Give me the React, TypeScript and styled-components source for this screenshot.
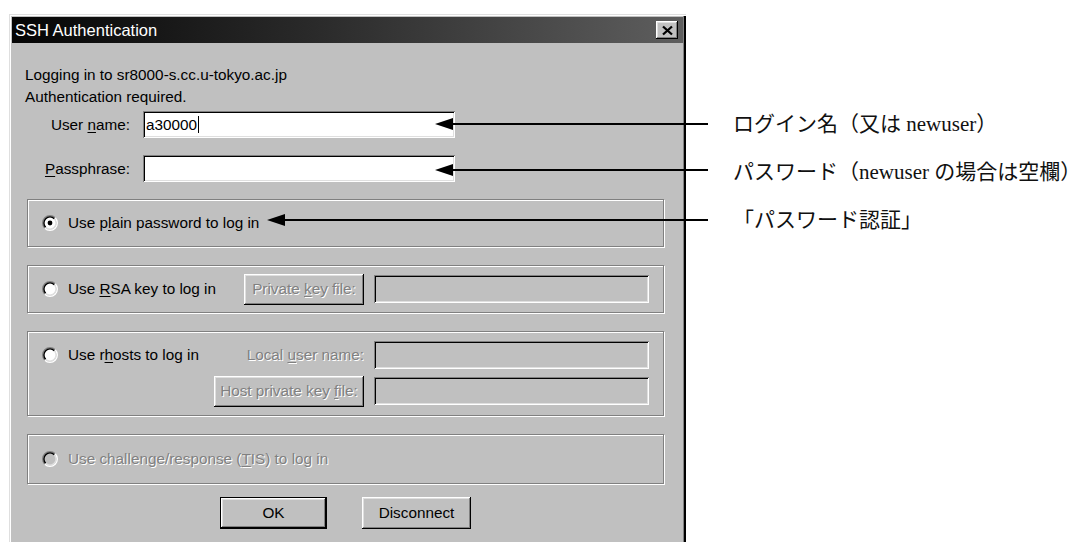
import styled, { createGlobalStyle } from "styled-components";

const GlobalStyle = createGlobalStyle`
  html, body {
    margin: 0;
    padding: 0;
    background: #fff;
    overflow: hidden;
  }
  body {
    font-family: "Liberation Sans", Arial, sans-serif;
  }
`;

const Page = styled.div`
  position: relative;
  display: flex;
  align-items: flex-start;
  width: 1092px;
  height: 542px;
  overflow: hidden;
`;

/* ---------- dialog window ---------- */

const Window = styled.div`
  flex-shrink: 0;
  display: flex;
  flex-direction: column;
  box-sizing: border-box;
  width: 677px;
  height: 540px;
  margin: 14px 0 0 9px;
  padding: 3px 3px 0 3px;
  background: #c0c0c0;
  box-shadow:
    inset 1px 1px 0 #dfdfdf,
    inset 2px 2px 0 #fff,
    inset -2px 0 0 #000,
    inset -3px 0 0 #808080;
`;

const TitleBar = styled.div`
  display: flex;
  align-items: center;
  justify-content: space-between;
  height: 26px;
  padding: 0 5px 0 3px;
  background: linear-gradient(to right, #050505, #2a2a2a 45%, #5e5e5e);
  color: #fff;
  font-size: 16.5px;
`;

const CloseButton = styled.div`
  display: flex;
  align-items: center;
  justify-content: center;
  width: 22px;
  height: 18px;
  box-sizing: border-box;
  background: #c0c0c0;
  box-shadow:
    inset -1px -1px 0 #000,
    inset 1px 1px 0 #fff,
    inset -2px -2px 0 #808080,
    inset 2px 2px 0 #dfdfdf;
`;

const Body = styled.div`
  display: flex;
  flex-direction: column;
  padding: 21px 19px 0 15px;
  font-size: 15.3px;
  color: #000;
`;

const Info = styled.div`
  line-height: 22px;
  margin-left: -2px;
`;

const Form = styled.div`
  display: grid;
  grid-template-columns: 103px 312px;
  column-gap: 13px;
  row-gap: 17px;
  align-items: center;
  margin-top: 3px;
`;

const FieldLabel = styled.span`
  justify-self: end;
  white-space: nowrap;
`;

const TextBox = styled.div<{ $disabled?: boolean }>`
  display: flex;
  align-items: center;
  box-sizing: border-box;
  height: ${(p) => (p.$disabled ? 28 : 27)}px;
  padding: 0 3px;
  background: ${(p) => (p.$disabled ? "#c0c0c0" : "#fff")};
  box-shadow:
    inset 1px 1px 0 #808080,
    inset -1px -1px 0 #fff,
    inset 2px 2px 0 #000,
    inset -2px -2px 0 #dfdfdf;
`;

const Caret = styled.span`
  display: inline-block;
  width: 1px;
  height: 17px;
  margin-left: 1px;
  background: #000;
`;

const Groups = styled.div`
  display: flex;
  flex-direction: column;
  gap: 18px;
  margin-top: 17px;
`;

const Group = styled.div<{ $height: number }>`
  display: grid;
  grid-template-columns: 1fr auto 275px;
  column-gap: 10px;
  row-gap: 7px;
  align-items: center;
  align-content: center;
  box-sizing: border-box;
  min-height: ${(p) => p.$height}px;
  padding: 0 14px;
  border: 1px solid #808080;
  box-shadow: inset 1px 1px 0 #fff, 1px 1px 0 #fff;
`;

const RadioLabel = styled.label<{ $disabled?: boolean }>`
  display: flex;
  align-items: center;
  gap: 10px;
  white-space: nowrap;
  color: ${(p) => (p.$disabled ? "#808080" : "#000")};
  text-shadow: ${(p) => (p.$disabled ? "1px 1px 0 #fff" : "none")};
`;

const DimLabel = styled.span`
  justify-self: end;
  white-space: nowrap;
  color: #808080;
  text-shadow: 1px 1px 0 #fff;
`;

const Key = styled.u`
  text-underline-offset: 2px;
`;

const PushButton = styled.button<{ $width: number; $default?: boolean }>`
  justify-self: end;
  box-sizing: border-box;
  width: ${(p) => p.$width}px;
  height: ${(p) => (p.$default !== undefined ? 32 : 31)}px;
  padding: 0;
  border: ${(p) => (p.$default ? "1px solid #000" : "none")};
  background: #c0c0c0;
  color: #000;
  font-family: "Liberation Sans", Arial, sans-serif;
  font-size: 15.3px;
  box-shadow:
    inset -1px -1px 0 #000,
    inset 1px 1px 0 #fff,
    inset -2px -2px 0 #808080,
    inset 2px 2px 0 #dfdfdf;

  &:disabled {
    color: #808080;
    text-shadow: 1px 1px 0 #fff;
  }
`;

const ButtonRow = styled.div`
  display: flex;
  justify-content: center;
  gap: 35px;
  margin-top: 13px;
`;

/* ---------- notes to the right ---------- */

const Notes = styled.div`
  display: flex;
  flex-direction: column;
  margin-left: 47px;
  padding-top: 100px;
  font-family: "Liberation Serif", "Noto Sans CJK JP", serif;
  font-size: 21px;
  line-height: 48px;
  color: #111;
  white-space: nowrap;
`;

const Arrows = styled.svg`
  position: absolute;
  top: 0;
  left: 0;
  pointer-events: none;
`;

function Radio({ checked, disabled }: { checked?: boolean; disabled?: boolean }) {
  // sunken round radio: dark arcs top-left, light arcs bottom-right
  const arc = (r: number) => {
    const d = r * 0.7071;
    return {
      tl: `M ${8 - d} ${8 + d} A ${r} ${r} 0 0 1 ${8 + d} ${8 - d}`,
      br: `M ${8 + d} ${8 - d} A ${r} ${r} 0 0 1 ${8 - d} ${8 + d}`,
    };
  };
  const outer = arc(7.3);
  const inner = arc(6.1);
  return (
    <svg width="16" height="16" viewBox="0 0 16 16">
      <circle cx="8" cy="8" r="6" fill={disabled ? "#c0c0c0" : "#fff"} />
      <path d={outer.tl} stroke="#808080" strokeWidth="1.4" fill="none" />
      <path d={outer.br} stroke="#fff" strokeWidth="1.4" fill="none" />
      <path d={inner.tl} stroke="#000" strokeWidth="1.4" fill="none" />
      <path d={inner.br} stroke="#dfdfdf" strokeWidth="1.4" fill="none" />
      {checked && <circle cx="8" cy="8" r="2.4" fill="#000" />}
    </svg>
  );
}

function Arrow({ tip, y }: { tip: number; y: number }) {
  return (
    <g>
      <line x1={tip + 14} y1={y} x2={708} y2={y} stroke="#000" strokeWidth="2" />
      <polygon points={`${tip},${y} ${tip + 18},${y - 6} ${tip + 18},${y + 6}`} fill="#000" />
    </g>
  );
}

export default function App() {
  return (
    <>
      <GlobalStyle />
      <Page>
        <Window>
          <TitleBar>
            <span>SSH Authentication</span>
            <CloseButton>
              <svg width="13" height="11" viewBox="0 0 13 11">
                <path d="M2 1.5 L11 9.5 M11 1.5 L2 9.5" stroke="#000" strokeWidth="2.3" />
              </svg>
            </CloseButton>
          </TitleBar>
          <Body>
            <Info>
              Logging in to sr8000-s.cc.u-tokyo.ac.jp
              <br />
              Authentication required.
            </Info>
            <Form>
              <FieldLabel>
                User <Key>n</Key>ame:
              </FieldLabel>
              <TextBox>
                a30000
                <Caret />
              </TextBox>
              <FieldLabel>
                <Key>P</Key>assphrase:
              </FieldLabel>
              <TextBox />
            </Form>
            <Groups>
              <Group $height={48}>
                <RadioLabel>
                  <Radio checked />
                  <span>
                    Use p<Key>l</Key>ain password to log in
                  </span>
                </RadioLabel>
              </Group>
              <Group $height={48}>
                <RadioLabel>
                  <Radio />
                  <span>
                    Use <Key>R</Key>SA key to log in
                  </span>
                </RadioLabel>
                <PushButton $width={120} disabled>
                  Private <Key>k</Key>ey file:
                </PushButton>
                <TextBox $disabled />
              </Group>
              <Group $height={85}>
                <RadioLabel>
                  <Radio />
                  <span>
                    Use r<Key>h</Key>osts to log in
                  </span>
                </RadioLabel>
                <DimLabel>
                  Local <Key>u</Key>ser name:
                </DimLabel>
                <TextBox $disabled />
                <span />
                <PushButton $width={150} disabled>
                  Host private key <Key>f</Key>ile:
                </PushButton>
                <TextBox $disabled />
              </Group>
              <Group $height={50}>
                <RadioLabel $disabled>
                  <Radio disabled />
                  <span>
                    Use challenge/response (<Key>T</Key>IS) to log in
                  </span>
                </RadioLabel>
              </Group>
            </Groups>
            <ButtonRow>
              <PushButton $width={107} $default>
                OK
              </PushButton>
              <PushButton $width={109} $default={false}>
                Disconnect
              </PushButton>
            </ButtonRow>
          </Body>
        </Window>
        <Notes>
          <span>ログイン名（又は newuser）</span>
          <span>パスワード（newuser の場合は空欄）</span>
          <span>「パスワード認証」</span>
        </Notes>
        <Arrows width="1092" height="542" viewBox="0 0 1092 542">
          <Arrow tip={435} y={124} />
          <Arrow tip={435} y={170} />
          <Arrow tip={267} y={220} />
        </Arrows>
      </Page>
    </>
  );
}
